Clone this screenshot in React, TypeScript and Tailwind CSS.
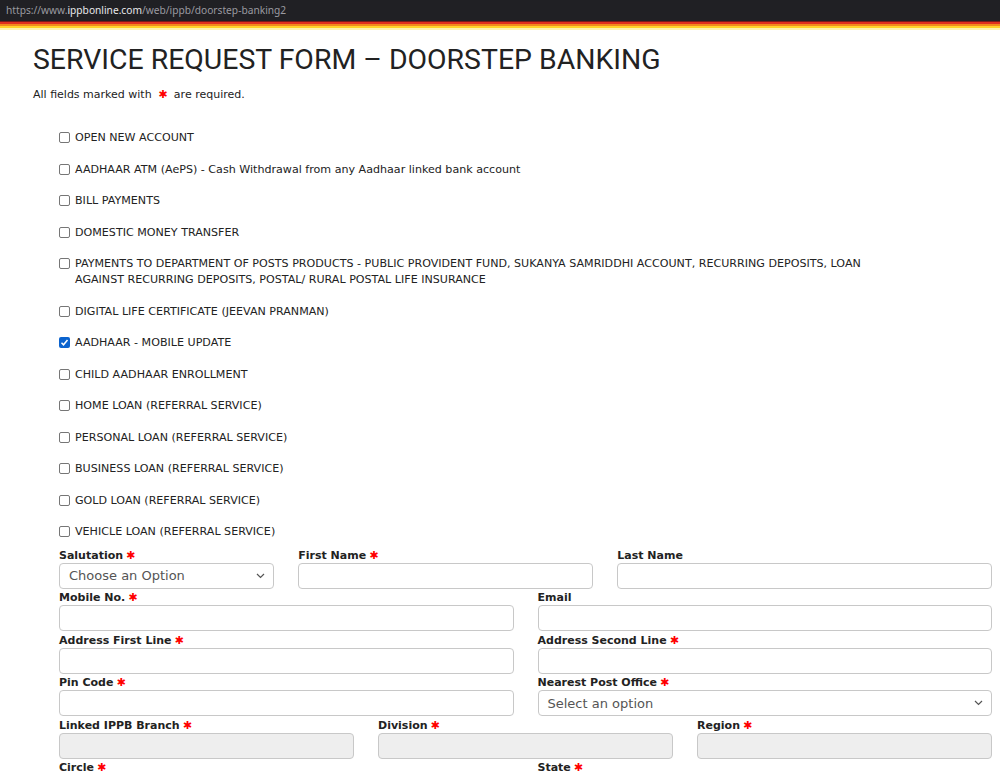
import React from "react";

const Star = () => <span className="text-[#ff0000] ml-[3px]">✱</span>;

const services: string[] = [
  "OPEN NEW ACCOUNT",
  "AADHAAR ATM (AePS) - Cash Withdrawal from any Aadhaar linked bank account",
  "BILL PAYMENTS",
  "DOMESTIC MONEY TRANSFER",
  "PAYMENTS TO DEPARTMENT OF POSTS PRODUCTS - PUBLIC PROVIDENT FUND, SUKANYA SAMRIDDHI ACCOUNT, RECURRING DEPOSITS, LOAN AGAINST RECURRING DEPOSITS, POSTAL/ RURAL POSTAL LIFE INSURANCE",
  "DIGITAL LIFE CERTIFICATE (JEEVAN PRANMAN)",
  "AADHAAR - MOBILE UPDATE",
  "CHILD AADHAAR ENROLLMENT",
  "HOME LOAN (REFERRAL SERVICE)",
  "PERSONAL LOAN (REFERRAL SERVICE)",
  "BUSINESS LOAN (REFERRAL SERVICE)",
  "GOLD LOAN (REFERRAL SERVICE)",
  "VEHICLE LOAN (REFERRAL SERVICE)",
];

const Field = ({
  label,
  req,
  span,
  kind = "input",
  placeholder,
  disabled,
}: {
  label: string;
  req?: boolean;
  span: string;
  kind?: "input" | "select";
  placeholder?: string;
  disabled?: boolean;
}) => (
  <div className={span}>
    <div className="text-[11px] font-bold text-[#222] leading-[15px] h-[15px] whitespace-nowrap">
      {label}
      {req && <Star />}
    </div>
    {kind === "select" ? (
      <div className="h-[26px] border border-[#c8c8c8] rounded-[4px] bg-white flex items-center justify-between pl-[9px] pr-[8px]">
        <span className="text-[13px] text-[#555]">{placeholder}</span>
        <svg width="9" height="6" viewBox="0 0 9 6" fill="none">
          <path d="M1 1l3.5 3.5L8 1" stroke="#555" strokeWidth="1.2" />
        </svg>
      </div>
    ) : (
      <div
        className={`h-[26px] border border-[#c8c8c8] rounded-[4px] ${
          disabled ? "bg-[#eeeeee]" : "bg-white"
        }`}
      />
    )}
  </div>
);

export default function App() {
  return (
    <div
      className="w-[1000px] h-[775px] overflow-hidden bg-white"
      style={{ fontFamily: "'DejaVu Sans', Verdana, sans-serif" }}
    >
      <div className="h-[21px] bg-[#202024] flex items-center pl-[6px]">
        <span className="text-[10.2px] text-[#9a9aa0] leading-none" style={{ fontFamily: "'Noto Sans', sans-serif" }}>
          https://www.<span className="text-[#e8e8ea]">ippbonline.com</span>/web/ippb/doorstep-banking2
        </span>
      </div>
      <div className="h-[1px] bg-[#7a1a1a]" />
      <div className="h-[2px] bg-[#e0301e]" />
      <div className="h-[2px] bg-[#f28a1c]" />
      <div className="h-[2px] bg-[#ffd42a]" />
      <div className="h-[2px] bg-[#fff4b0]" />

      <div className="pl-[33px]">
        <h1
          className="mt-[14px] text-[28.4px] leading-[32px] text-[#222] font-normal whitespace-nowrap"
          style={{ fontFamily: "Roboto, 'Noto Sans', sans-serif" }}
        >
          SERVICE REQUEST FORM – DOORSTEP BANKING
        </h1>
        <p className="mt-[12px] text-[11px] text-[#222] leading-[14px]">
          All fields marked with <span className="text-[#ff0000] mx-[3px]">✱</span> are required.
        </p>
      </div>

      <div className="pl-[59px] pr-[90px] mt-[28px] flex flex-col gap-[15.5px]">
        {services.map((s, i) => (
          <label key={s} className="flex items-start gap-[5px] text-[11.1px] text-[#222] leading-[16px]">
            {i === 6 ? (
              <span className="mt-[2px] w-[11px] h-[11px] shrink-0 rounded-[2px] bg-[#0b63ce] flex items-center justify-center">
                <svg width="9" height="9" viewBox="0 0 9 9">
                  <path d="M1.5 4.8l2 2L7.5 2" stroke="white" strokeWidth="1.5" fill="none" />
                </svg>
              </span>
            ) : (
              <span className="mt-[2px] w-[11px] h-[11px] shrink-0 rounded-[2px] border border-[#767676] bg-white" />
            )}
            <span className={i === 4 ? "max-w-[815px]" : ""}>{s}</span>
          </label>
        ))}
      </div>

      <div className="ml-[59px] w-[933px] mt-[7.5px] grid grid-cols-12 gap-x-[24px] gap-y-[1.6px]">
        <Field label="Salutation" req span="col-span-3" kind="select" placeholder="Choose an Option" />
        <Field label="First Name" req span="col-span-4" />
        <Field label="Last Name" span="col-span-5" />
        <Field label="Mobile No." req span="col-span-6" />
        <Field label="Email" span="col-span-6" />
        <Field label="Address First Line" req span="col-span-6" />
        <Field label="Address Second Line" req span="col-span-6" />
        <Field label="Pin Code" req span="col-span-6" />
        <Field label="Nearest Post Office" req span="col-span-6" kind="select" placeholder="Select an option" />
        <Field label="Linked IPPB Branch" req span="col-span-4" disabled />
        <Field label="Division" req span="col-span-4" disabled />
        <Field label="Region" req span="col-span-4" disabled />
        <Field label="Circle" req span="col-span-6" disabled />
        <Field label="State" req span="col-span-6" disabled />
      </div>
    </div>
  );
}
